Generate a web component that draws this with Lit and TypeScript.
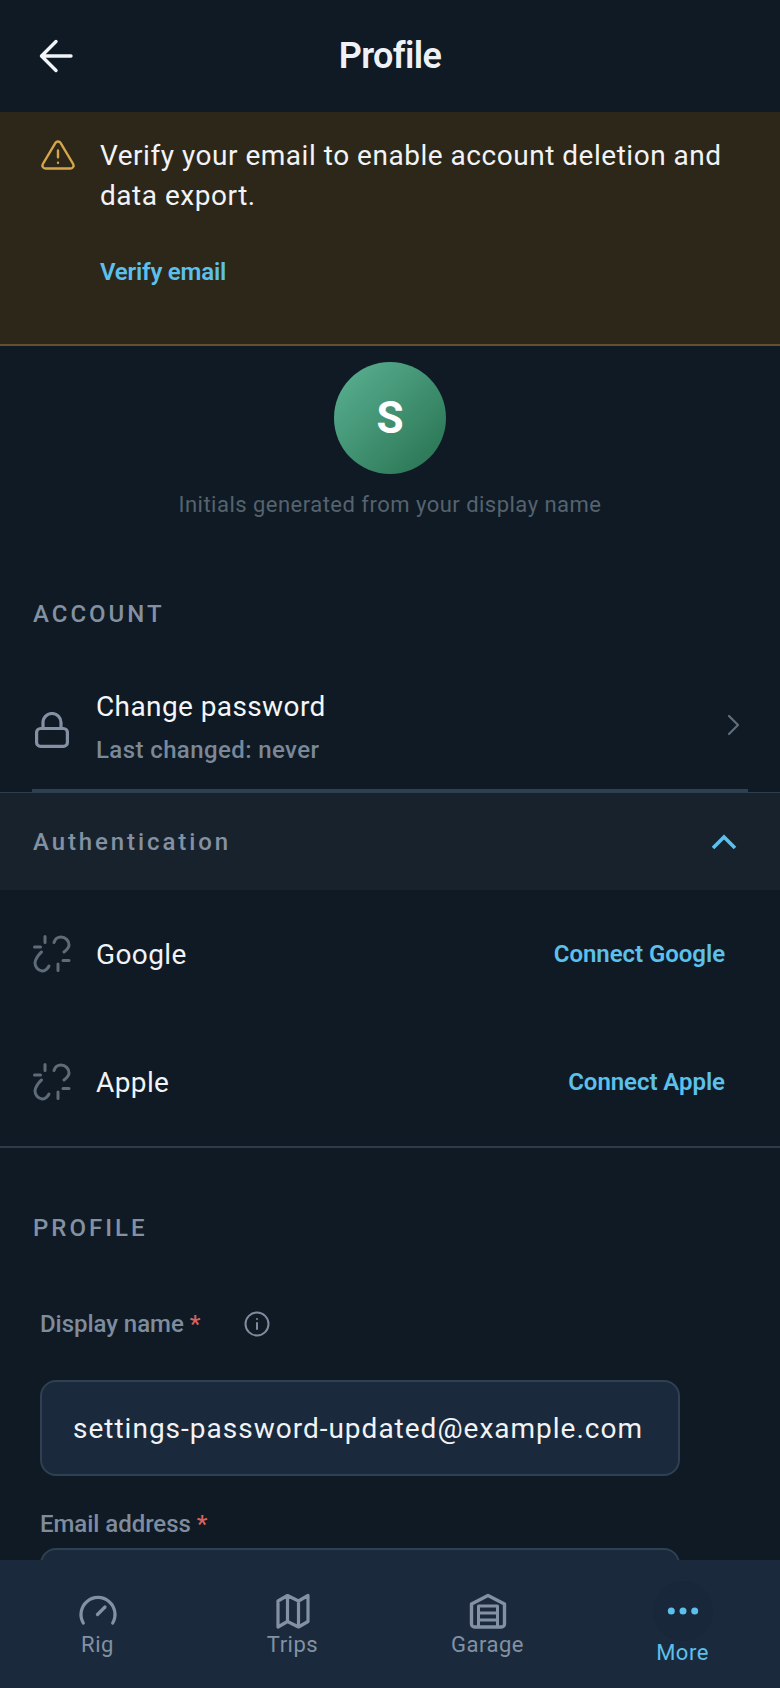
import { LitElement, html, css, svg } from "lit";
import { customElement } from "lit/decorators.js";

const icon = (w: number, h: number, vb: string, cls: string, body: unknown) => html`<svg class=${cls} width=${w} height=${h} viewBox=${vb} fill="none" stroke="currentColor" stroke-linecap="round" stroke-linejoin="round">${body}</svg>`;

const unlink = () => icon(38, 38, "0 0 38 38", "ic-unlink", svg`
  <g stroke-width="3">
    <path d="M12 1.500v6M1.500 12h6M25 29v6.500M30 25.500h6"/>
    <path d="M21 7.500C22 4 25 2 28 2a8 8 0 0 1 8 8c0 3-2.500 5-5 7"/>
    <path d="M16 31c-1.500 3-4 5-7 5a8 8 0 0 1-7-8c0-3 3-8 6.500-11"/>
  </g>`);

@customElement("app-root")
export class AppRoot extends LitElement {
  static styles = css`
    :host { display: block; font-family: Roboto, "Noto Sans", sans-serif; color: #f2f5f8; }
    * { box-sizing: border-box; }
    .page { width: 780px; height: 1688px; display: flex; flex-direction: column; background: #0f1a24; overflow: hidden; }
    .main { flex: 1; min-height: 0; overflow: hidden; }
    .header { height: 112px; display: grid; grid-template-columns: 112px 1fr 112px; align-items: center; }
    .back { color: #f2f5f8; padding-left: 39px; display: flex; }
    .title { text-align: center; font-size: 36px; font-weight: 600; line-height: 40px; letter-spacing: -0.6px; color: #eef2f7; margin-top: -1px; }
    .banner { height: 234px; background: #2d2719; border-bottom: 2px solid #64502a; padding: 24px 40px 0 40px; display: flex; gap: 24px; }
    .warn { color: #d7a549; flex: none; margin-top: 1px; }
    .banner-text { font-size: 28px; line-height: 40px; letter-spacing: 0.52px; color: #f1f3f6; margin: 0; }
    .verify { display: block; margin-top: 40px; font-size: 24px; line-height: 32px; font-weight: 600; color: #5cc0ec; letter-spacing: -0.2px; }
    .avatar-wrap { display: flex; flex-direction: column; align-items: center; padding-top: 16px; }
    .avatar { width: 112px; height: 112px; border-radius: 50%; background: linear-gradient(135deg, #5bb394, #26704f); display: flex; align-items: center; justify-content: center; font-size: 44px; font-weight: 700; color: #fff; }
    .caption { margin-top: 16px; font-size: 22px; line-height: 30px; letter-spacing: 0.48px; color: #55636f; }
    .section { font-size: 24px; line-height: 30px; font-weight: 500; letter-spacing: 3px; color: #8391a3; padding-left: 33px; }
    .account { margin-top: 79px; }
    .row { margin: 0 32px; height: 163px; padding-top: 32px; border-bottom: 3px solid #2d4055; display: flex; align-items: center; }
    .lock { color: #8391a3; flex: none; margin-left: 3px; margin-top: 10px; }
    .row-text { margin-left: 27px; flex: 1; margin-top: 5px; }
    .row-title { font-size: 28px; line-height: 36px; letter-spacing: 0.4px; color: #f4f6f9; }
    .row-sub { font-size: 24px; line-height: 32px; font-weight: 500; letter-spacing: 0.4px; color: #7a8899; margin-top: 9px; }
    .chev { color: #5f6f7f; margin-right: 6px; }
    .auth-head { height: 98px; background: #18222d; border-top: 1px solid #2d3e4f; display: flex; align-items: center; padding: 0 43px 0 33px; justify-content: space-between; }
    .auth-label { font-size: 24px; font-weight: 500; letter-spacing: 2.9px; color: #8391a3; }
    .up { color: #5cc0ec; }
    .providers { border-bottom: 2px solid #2e3b49; }
    .prov { height: 128px; padding: 0 55px 0 33px; display: flex; align-items: center; gap: 25px; }
    .ic-unlink { color: #5e6c78; flex: none; }
    .prov-name { flex: 1; font-size: 28px; letter-spacing: 0.4px; color: #f1f3f6; }
    .link { font-size: 24px; font-weight: 600; color: #5cc0ec; letter-spacing: -0.05px; }
    .profile { margin-top: 65px; }
    .field { padding: 0 40px; }
    .label { display: flex; align-items: center; font-size: 24px; line-height: 32px; font-weight: 500; letter-spacing: -0.05px; color: #7e8c9e; }
    .req { color: #d9625f; margin-left: 6px; }
    .info { color: #7e8c9e; margin-left: 44px; }
    .input { width: 640px; height: 96px; background: #1a2a3c; border: 2px solid #2f4053; border-radius: 16px; display: flex; align-items: center; padding-left: 31px; font-size: 28px; letter-spacing: 1px; color: #f1f3f6; white-space: nowrap; }
    .f1 { margin-top: 65px; }
    .f1 .input { margin-top: 40px; }
    .f2 { margin-top: 32px; }
    .f2 .input { margin-top: 8px; }
    .nav { flex: none; height: 128px; background: #1a2a3c; display: grid; grid-template-columns: repeat(4, 1fr); }
    .tab { display: flex; flex-direction: column; align-items: center; padding-top: 30px; color: #8391a3; font-size: 22px; line-height: 30px; letter-spacing: 0.5px; }
    .tab svg { display: block; }
    .more { padding-top: 21px; color: #5cc0ec; }
    .pill { width: 60px; height: 60px; border-radius: 50%; background: #182739; display: flex; align-items: center; justify-content: center; }
    .more span { margin-top: -3px; }
    .dots { fill: #5cc0ec; }
  `;

  render() {
    return html`<div class="page">
      <div class="main">
        <header class="header">
          <div class="back">${icon(36, 36, "0 0 36 36", "", svg`<path stroke-width="3.400" d="M32 18H3M17 3.500L2.500 18 17 32.500"/>`)}</div>
          <div class="title">Profile</div>
          <div></div>
        </header>
        <section class="banner">
          ${icon(36, 36, "0 0 24 24", "warn", svg`<path stroke-width="1.600" d="M10.300 3.900 1.900 18a2 2 0 0 0 1.700 3h16.800a2 2 0 0 0 1.700-3L13.700 3.900a2 2 0 0 0-3.400 0zM12 9v4.500M12 17.200h.01"/>`)}
          <div>
            <p class="banner-text">Verify your email to enable account deletion and data export.</p>
            <a class="verify">Verify email</a>
          </div>
        </section>
        <div class="avatar-wrap">
          <div class="avatar">S</div>
          <div class="caption">Initials generated from your display name</div>
        </div>
        <div class="section account">ACCOUNT</div>
        <div class="row">
          ${icon(34, 36, "0 0 34 36", "lock", svg`<g stroke-width="3.200"><rect x="1.600" y="16.500" width="30.800" height="17.900" rx="4"/><path d="M8 16.500v-6a9 9 0 0 1 18 0v6"/></g>`)}
          <div class="row-text">
            <div class="row-title">Change password</div>
            <div class="row-sub">Last changed: never</div>
          </div>
          ${icon(16, 24, "0 0 16 24", "chev", svg`<path stroke-width="2.200" d="M3 3l9 9-9 9"/>`)}
        </div>
        <div class="auth-head">
          <div class="auth-label">Authentication</div>
          ${icon(26, 16, "0 0 26 16", "up", svg`<path stroke-width="3.600" stroke-linecap="butt" stroke-linejoin="miter" d="M2 14 13 3l11 11"/>`)}
        </div>
        <div class="providers">
          <div class="prov">${unlink()}<div class="prov-name">Google</div><a class="link">Connect Google</a></div>
          <div class="prov">${unlink()}<div class="prov-name">Apple</div><a class="link">Connect Apple</a></div>
        </div>
        <div class="section profile">PROFILE</div>
        <div class="field f1">
          <div class="label">Display name<span class="req">*</span>
            ${icon(26, 26, "0 0 26 26", "info", svg`<circle cx="13" cy="13" r="11.500" stroke-width="2"/><path stroke-width="2" d="M13 12v6M13 8h.01"/>`)}
          </div>
          <div class="input">settings-password-updated@example.com</div>
        </div>
        <div class="field f2">
          <div class="label">Email address<span class="req">*</span></div>
          <div class="input"></div>
        </div>
      </div>
      <nav class="nav">
        <div class="tab">
          ${icon(40, 40, "0 0 40 40", "", svg`<g stroke-width="3.200"><path d="M5.300 33A17 17 0 1 1 34.700 33"/><path d="M19.500 24.500L27 17"/></g>`)}
          <span>Rig</span>
        </div>
        <div class="tab">
          ${icon(40, 40, "0 0 40 40", "", svg`<g stroke-width="3.200"><path d="M5 11 14.500 5.500 25.500 11 35 5.500V31.500L25.500 37 14.500 31.500 5 37zM14.500 5.500v26M25.500 11v26"/></g>`)}
          <span>Trips</span>
        </div>
        <div class="tab">
          ${icon(40, 40, "0 0 40 40", "", svg`<path stroke-width="3.400" d="M3.500 14 20 5.500 36.500 14V34a3 3 0 0 1-3 3H6.500a3 3 0 0 1-3-3z"/><path stroke-width="3" stroke-linecap="butt" d="M10.500 37V16h19v21M10.500 23h19M10.500 30h19"/>`)}
          <span>Garage</span>
        </div>
        <div class="tab more">
          <div class="pill"><svg class="dots" width="32" height="8" viewBox="0 0 32 8"><circle cx="4.300" cy="4" r="3.500"/><circle cx="16" cy="4" r="3.500"/><circle cx="27.700" cy="4" r="3.500"/></svg></div>
          <span>More</span>
        </div>
      </nav>
    </div>`;
  }
}
